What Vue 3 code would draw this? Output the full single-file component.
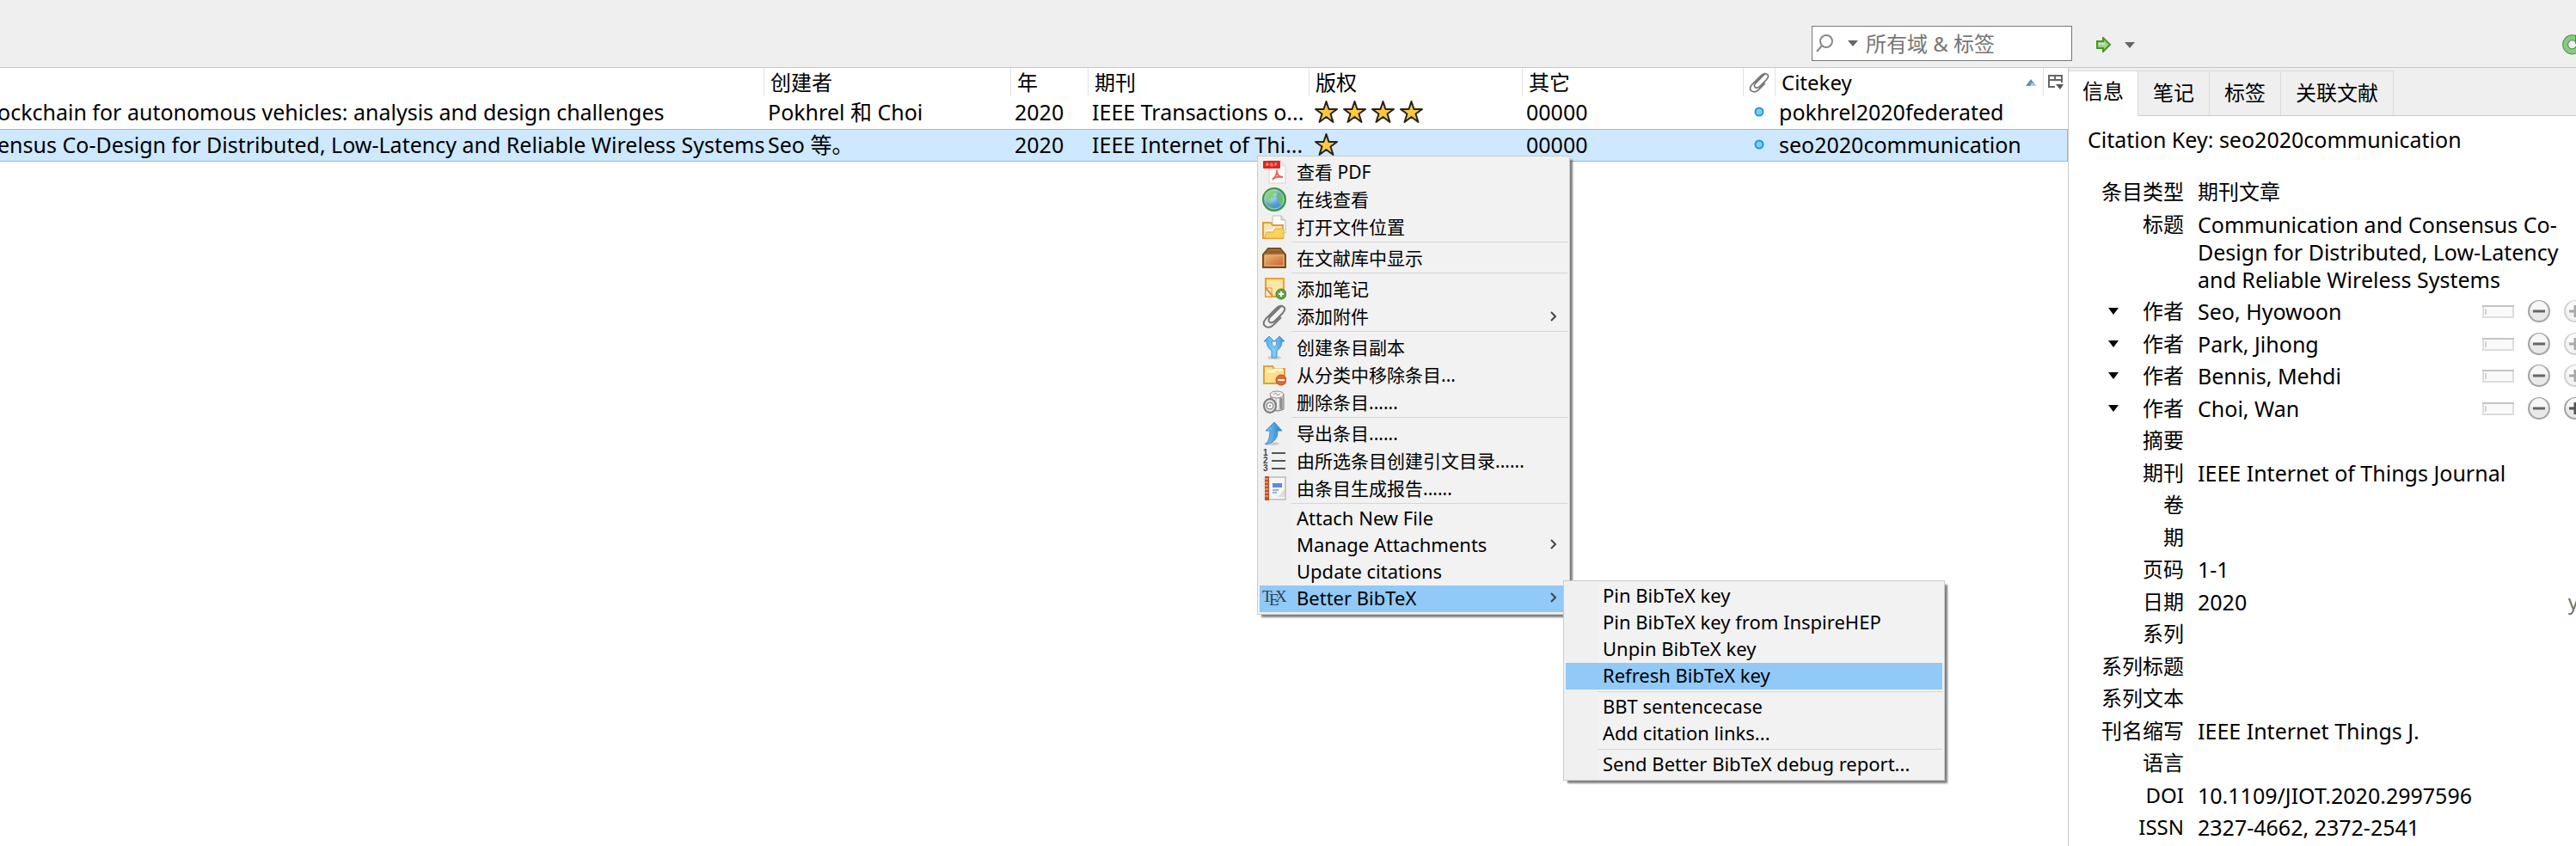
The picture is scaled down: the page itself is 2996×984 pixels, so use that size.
<script setup>
import { ref } from 'vue'

const query = ref('')

const rows = [
  { title: 'ockchain for autonomous vehicles: analysis and design challenges', creator: 'Pokhrel 和 Choi', year: '2020', journal: 'IEEE Transactions o...', stars: 4, extra: '00000', key: 'pokhrel2020federated', selected: false },
  { title: 'ensus Co-Design for Distributed, Low-Latency and Reliable Wireless Systems', creator: 'Seo 等。', year: '2020', journal: 'IEEE Internet of Thi...', stars: 1, extra: '00000', key: 'seo2020communication', selected: true },
]

const tabs = ['信息', '笔记', '标签', '关联文献']

const fields = [
  { label: '条目类型', value: '期刊文章', cjk: true },
  { label: '标题', value: 'Communication and Consensus Co-Design for Distributed, Low-Latency and Reliable Wireless Systems' },
  { label: '作者', value: 'Seo, Hyowoon', author: true, dim: true },
  { label: '作者', value: 'Park, Jihong', author: true, dim: true },
  { label: '作者', value: 'Bennis, Mehdi', author: true, dim: true },
  { label: '作者', value: 'Choi, Wan', author: true },
  { label: '摘要', value: '' },
  { label: '期刊', value: 'IEEE Internet of Things Journal' },
  { label: '卷', value: '' },
  { label: '期', value: '' },
  { label: '页码', value: '1-1' },
  { label: '日期', value: '2020', hint: 'y' },
  { label: '系列', value: '' },
  { label: '系列标题', value: '' },
  { label: '系列文本', value: '' },
  { label: '刊名缩写', value: 'IEEE Internet Things J.' },
  { label: '语言', value: '' },
  { label: 'DOI', value: '10.1109/JIOT.2020.2997596' },
  { label: 'ISSN', value: '2327-4662, 2372-2541' },
]

const clip = '<path d="M22 2 L9 15 Q6 19 9 21 Q12 22 15 19 L24 10 Q28 5 25 3 Q21 0 16 5 L4 17 Q0 22 3 25 Q8 29 13 24 L22 15" fill="none" stroke="#777" stroke-width="2"/>'

const icons = {
  pdf: '<path d="M8 1h14l5 6v20H8z" fill="#fbfbfb" stroke="#d4d4d4"/><path d="M22 1v6h5" fill="#e8e8e8" stroke="#d4d4d4"/><rect x="1" y="1" width="20" height="9" rx="1" fill="#e0281c"/><path d="M5 7V4h2v2H5M10 7V4q3 0 2 3zM15 7V4h2M15 5h2" fill="none" stroke="#f8a49c"/><path d="M17 12q1 5-5 11M17 14q1 6 7 6M12 22q5-3 11-2" fill="none" stroke="#e8645a" stroke-width="2"/>',
  globe: '<defs><radialGradient id="gl" cx=".35" cy=".3"><stop offset="0" stop-color="#d6efff"/><stop offset="1" stop-color="#4b95d6"/></radialGradient></defs><circle cx="14" cy="14" r="13" fill="url(#gl)" stroke="#3d9445" stroke-width="2"/><path d="M3 8Q7 2 15 3l2 3-4 2 1 4-4 1-1 5q-5-1-6-6z" fill="#83cf83"/><path d="M18 6l6 2 2 7-3 6-4-3 1-4-4-3z" fill="#69bd6c"/><path d="M6 20l5 1 3 5-6-2z" fill="#5fb364"/><circle cx="14" cy="14" r="11" fill="none" stroke="#bfe5bf" opacity=".7"/>',
  open: '<path d="M12 1h10l5 5v15H12z" fill="#fafafa" stroke="#bdbdbd"/><path d="M22 1v5h5" fill="#ddd" stroke="#bdbdbd"/><path d="M1 9h9l2 3h12v15H1z" fill="#f9e3ad" stroke="#dca03c" stroke-width="2"/><path d="M3 26l2-6h8l2-4h10v11H3z" fill="#f8d459" stroke="#e3aa45"/><path d="M5 18h7l2-4" fill="none" stroke="#fff" stroke-width="2"/>',
  library: '<defs><linearGradient id="lb" x2="1" y2="1"><stop offset="0" stop-color="#ebb573"/><stop offset="1" stop-color="#cb632f"/></linearGradient></defs><path d="M7 3h14l6 7v15H1V10z" fill="#b77c40" stroke="#784e1d" stroke-width="2"/><path d="M3 9l5-4h12l5 4z" fill="#94602c"/><rect x="3" y="11" width="22" height="12" fill="url(#lb)" stroke="#efbd84"/>',
  note: '<rect x="4" y="2" width="21" height="21" fill="#fae397" stroke="#f09d32" stroke-width="2"/><rect x="7" y="5" width="15" height="15" fill="#fbe8a9"/><path d="M4 13h7v10H4z" fill="#fff3df" stroke="#e28c2c"/><path d="M4 13l8 9" stroke="#e28c2c" stroke-width="2"/><circle cx="22" cy="20" r="6" fill="#62a34b" stroke="#3c7e2d"/><path d="M22 17v6M19 20h6" stroke="#fff" stroke-width="2"/>',
  clip,
  split: '<defs><linearGradient id="sp" x2="1"><stop offset="0" stop-color="#4daae9"/><stop offset=".5" stop-color="#84ccf6"/><stop offset="1" stop-color="#348fd2"/></linearGradient></defs><ellipse cx="14" cy="26" rx="8" ry="2" fill="#ccc"/><path d="M8 1l6 6h-3q0 5 3 7 3-2 3-7h-3l6-6 6 6h-3q0 7-6 11v8h-6v-8Q5 14 5 7H2z" fill="url(#sp)" stroke="#4397d2"/>',
  remove: '<path d="M2 4h10l2 3h12v17H2z" fill="#f9e08b" stroke="#d9a23c" stroke-width="2"/><path d="M5 10h8l2-2h9" fill="none" stroke="#fff8d8" stroke-width="3"/><circle cx="22" cy="20" r="6" fill="#e06a32" stroke="#b7481e"/><path d="M18 20h8" stroke="#fff" stroke-width="2"/>',
  trash: '<path d="M10 5v17q7 4 15 0V5z" fill="#d2d2d2" stroke="#777"/><path d="M22 9v13" stroke="#8c8c8c" stroke-width="3"/><path d="M14 9v12M18 9v13" stroke="#f2f2f2" stroke-width="2"/><ellipse cx="17" cy="5" rx="8" ry="4" fill="#f0f0f0" stroke="#888"/><path d="M13 5l3-2 2 3 3-2" fill="none" stroke="#999"/><ellipse cx="9" cy="18" rx="7" ry="8" fill="#e0e0e0" stroke="#777" stroke-width="2"/><circle cx="9" cy="18" r="4" fill="#f4f4f4" stroke="#777"/><circle cx="9" cy="18" r="1" fill="#888"/>',
  export: '<defs><linearGradient id="ex" x2="1"><stop offset="0" stop-color="#7cc9f5"/><stop offset="1" stop-color="#267fc4"/></linearGradient></defs><ellipse cx="11" cy="26" rx="9" ry="2" fill="#ccc"/><path d="M14 1l9 10h-5q1 13-14 16 5-5 5-16H4z" fill="url(#ex)" stroke="#438fca"/>',
  list: '<g stroke="#555" stroke-width="2"><path d="M11 5h16M11 14h16M11 23h16"/></g><g fill="#444" font-family="Liberation Sans, sans-serif" font-size="10" font-weight="bold"><text x="1" y="8">1</text><text x="1" y="17">2</text><text x="1" y="26">3</text></g>',
  report: '<rect x="6" y="1" width="21" height="26" fill="#f6f6f6" stroke="#c8c8c8" stroke-width="2"/><rect x="3" y="0" width="5" height="28" fill="#c25022"/><path d="M1 3h6M1 7h6M1 11h6M1 15h6M1 19h6M1 23h6" stroke="#f4cab1"/><rect x="12" y="8" width="11" height="5" fill="#5a8bdd"/><path d="M12 16h7M12 19h5" stroke="#93b3e4" stroke-width="2"/><path d="M18 24l8-9v9z" fill="#ddd"/>',
  tex: '<g fill="#30414e" font-family="Liberation Serif, serif" font-size="19"><text x="0" y="19">T</text><text x="8" y="23">E</text><text x="15" y="19">X</text></g>',
}

const menu = [
  { icon: 'pdf', text: '查看 PDF' },
  { icon: 'globe', text: '在线查看' },
  { icon: 'open', text: '打开文件位置' },
  { sep: true },
  { icon: 'library', text: '在文献库中显示' },
  { sep: true },
  { icon: 'note', text: '添加笔记' },
  { icon: 'clip', text: '添加附件', more: true },
  { sep: true },
  { icon: 'split', text: '创建条目副本' },
  { icon: 'remove', text: '从分类中移除条目...' },
  { icon: 'trash', text: '删除条目......' },
  { sep: true },
  { icon: 'export', text: '导出条目......' },
  { icon: 'list', text: '由所选条目创建引文目录......' },
  { icon: 'report', text: '由条目生成报告......' },
  { sep: true },
  { text: 'Attach New File', short: true },
  { text: 'Manage Attachments', short: true, more: true },
  { text: 'Update citations', short: true },
  { icon: 'tex', text: 'Better BibTeX', short: true, more: true, active: true },
]

const submenu = [
  { text: 'Pin BibTeX key' },
  { text: 'Pin BibTeX key from InspireHEP' },
  { text: 'Unpin BibTeX key' },
  { text: 'Refresh BibTeX key', active: true },
  { sep: true },
  { text: 'BBT sentencecase' },
  { text: 'Add citation links...' },
  { sep: true },
  { text: 'Send Better BibTeX debug report...' },
]
</script>

<template>
  <div class="app">
    <header class="toolbar">
      <div class="search">
        <button class="search-mode" aria-label="搜索范围">
          <svg width="20" height="22" viewBox="0 0 20 22"><circle cx="12" cy="8" r="7" fill="none" stroke="#888" stroke-width="2" /><path d="M7 13L1 20" stroke="#888" stroke-width="2" /></svg>
          <svg width="12" height="7" viewBox="0 0 12 7"><path d="M0 0h12L6 7z" fill="#666" /></svg>
        </button>
        <input v-model="query" type="text" aria-label="搜索" placeholder="所有域 &amp; 标签" />
      </div>
      <div class="tools">
        <button class="locate" aria-label="定位">
          <svg width="18" height="18" viewBox="0 0 18 18"><path d="M1 5h7V1l8 8-8 8v-4H1z" fill="#a5d28c" stroke="#489624" stroke-width="2" /><path d="M3 8h7" stroke="#c7e6b4" stroke-width="2" /></svg>
          <svg width="12" height="7" viewBox="0 0 12 7"><path d="M0 0h12L6 7z" fill="#666" /></svg>
        </button>
        <button class="sync" aria-label="同步">
          <svg width="24" height="24" viewBox="0 0 24 24"><path d="M18 7A8 8 0 1 0 19 15" fill="none" stroke="#469341" stroke-width="7" /><path d="M18 7A8 8 0 1 0 19 15" fill="none" stroke="#8ac983" stroke-width="5" /><path d="M15 0v11h8z" fill="#469341" /></svg>
        </button>
      </div>
    </header>

    <main class="body">
      <section class="items">
        <table>
          <colgroup>
            <col /><col class="c-creator" /><col class="c-year" /><col class="c-journal" /><col class="c-rights" /><col class="c-extra" /><col class="c-clip" /><col class="c-key" /><col class="c-pick" />
          </colgroup>
          <thead>
            <tr>
              <th></th>
              <th>创建者</th>
              <th>年</th>
              <th>期刊</th>
              <th>版权</th>
              <th>其它</th>
              <th class="center" aria-label="附件"><svg width="24" height="24" viewBox="0 0 28 28" v-html="clip"></svg></th>
              <th><div class="sorted"><span>Citekey</span><svg width="12" height="8" viewBox="0 0 12 8"><path d="M0 8L6 0l6 8z" fill="#5a93b5" /><path d="M5 8L7 4l5 4z" fill="#a9d3ea" /></svg></div></th>
              <th class="center">
                <button class="picker" aria-label="选择列">
                  <svg width="18" height="17" viewBox="0 0 18 17"><path d="M1 15V1h15v8M1 6h15M8 1v5M1 14h7" fill="none" stroke="#666" stroke-width="2" /><path d="M9 11h9l-4 6z" fill="#555" /></svg>
                </button>
              </th>
            </tr>
          </thead>
          <tbody>
            <tr v-for="r in rows" :key="r.key" :class="{ selected: r.selected }">
              <td class="title">{{ r.title }}</td>
              <td>{{ r.creator }}</td>
              <td>{{ r.year }}</td>
              <td>{{ r.journal }}</td>
              <td>
                <div class="stars">
                  <svg v-for="n in r.stars" :key="n" width="27" height="26" viewBox="0 0 27 26"><path d="M13.500 1L16.500 10H26L18.500 15.500 21.500 25 13.500 19 5.500 25 8.500 15.500 1 10h9.500z" fill="#ffc83d" stroke="#222" stroke-width="2" stroke-linejoin="round" /></svg>
                </div>
              </td>
              <td>{{ r.extra }}</td>
              <td class="center"><svg class="dot" width="12" height="12" viewBox="0 0 12 12"><circle cx="6" cy="6" r="4.500" fill="#7fcdf5" stroke="#2196d8" stroke-width="2" /></svg></td>
              <td>{{ r.key }}</td>
              <td></td>
            </tr>
          </tbody>
        </table>
      </section>

      <aside class="side">
        <nav class="tabs" role="tablist">
          <button v-for="(t, i) in tabs" :key="t" role="tab" :aria-selected="i === 0" :class="{ on: i === 0 }">{{ t }}</button>
        </nav>
        <div class="info">
          <p class="citation">Citation Key: seo2020communication</p>
          <div v-for="(f, i) in fields" :key="i" class="field">
            <div class="label">
              <button v-if="f.author" class="drop" aria-label="作者类型"><svg width="12" height="8" viewBox="0 0 12 8"><path d="M0 0h12L6 8z" fill="#000" /></svg></button>
              <span>{{ f.label }}</span>
            </div>
            <div class="value" :class="{ cjk: f.cjk }">{{ f.value }}</div>
            <div v-if="f.author" class="actions">
              <button aria-label="切换为单字段"><svg width="37" height="15" viewBox="0 0 37 15"><rect x="1" y="1" width="35" height="13" fill="#fafafa" stroke="#ddd" stroke-width="2" /><path d="M0 1h37" stroke="#c4c4c4" stroke-width="2" /><path d="M4 4v7" stroke="#aaa" /></svg></button>
              <button aria-label="移除"><svg width="26" height="26" viewBox="0 0 26 26"><circle cx="13" cy="13" r="12" fill="#e9e9e9" stroke="#a4a4a4" stroke-width="2" /><path d="M3 11a10 10 0 0 1 20 0z" fill="#f7f7f7" /><path d="M6 13h14" stroke="#666" stroke-width="3" /></svg></button>
              <button aria-label="添加" :class="{ dim: f.dim }"><svg width="26" height="26" viewBox="0 0 26 26"><circle cx="13" cy="13" r="12" fill="#e9e9e9" stroke="#a4a4a4" stroke-width="2" /><path d="M3 11a10 10 0 0 1 20 0z" fill="#f7f7f7" /><path d="M6 13h14M13 6v14" stroke="#555" stroke-width="3" /></svg></button>
            </div>
            <span v-if="f.hint" class="hint">{{ f.hint }}</span>
          </div>
        </div>
      </aside>
    </main>

    <div class="menu main-menu" role="menu">
      <template v-for="(m, i) in menu" :key="i">
        <hr v-if="m.sep" />
        <button v-else role="menuitem" :class="{ short: m.short, active: m.active }">
          <span class="ico"><svg v-if="m.icon" width="28" height="28" viewBox="0 0 28 28" v-html="icons[m.icon]"></svg></span>
          <span>{{ m.text }}</span>
          <svg v-if="m.more" class="more" width="8" height="12" viewBox="0 0 8 12"><path d="M1 1l5 5-5 5" fill="none" stroke="#444" stroke-width="2" /></svg>
        </button>
      </template>
    </div>

    <div class="menu sub-menu" role="menu">
      <template v-for="(m, i) in submenu" :key="i">
        <hr v-if="m.sep" />
        <button v-else role="menuitem" class="short" :class="{ active: m.active }">
          <span class="ico"></span>
          <span>{{ m.text }}</span>
        </button>
      </template>
    </div>
  </div>
</template>

<style>
body {
  margin: 0;
  background: #fff;
}
</style>

<style scoped>
.app {
  position: relative;
  display: flex;
  flex-direction: column;
  height: 100vh;
  overflow: hidden;
  background: #fff;
  color: #000;
  font-family: "Noto Sans", "Noto Sans CJK SC", sans-serif;
  font-size: 24px;
  line-height: 32px;
}
svg {
  display: block;
  flex: none;
}
button {
  box-sizing: border-box;
  padding: 0;
  border: 0;
  background: none;
  color: inherit;
  font: inherit;
  flex: none;
}
.toolbar {
  flex: none;
  display: flex;
  justify-content: flex-end;
  height: 78px;
  background: #efefef;
  border-bottom: 1px solid #c8c8c8;
}
.search {
  box-sizing: border-box;
  display: flex;
  align-items: center;
  width: 303px;
  height: 41px;
  margin-top: 30px;
  border: 1px solid #767676;
  background: #fff;
}
.search-mode {
  display: flex;
  align-items: center;
  gap: 17px;
  padding: 0 9px 0 4px;
}
.search input {
  flex: 1;
  min-width: 0;
  padding: 0;
  border: 0;
  outline: 0;
  background: none;
  font: inherit;
}
.search input::placeholder {
  color: #767676;
  opacity: 1;
}
.tools {
  box-sizing: border-box;
  display: flex;
  justify-content: space-between;
  align-items: center;
  width: 586px;
  padding: 26px 0 0 28px;
}
.locate {
  display: flex;
  align-items: center;
  gap: 15px;
}
.sync {
  margin-right: -8px;
}
.body {
  flex: 1;
  display: flex;
  min-height: 0;
}
.items {
  flex: 1;
  min-width: 0;
  overflow: hidden;
}
table {
  width: 100%;
  table-layout: fixed;
  border-collapse: separate;
  border-spacing: 0;
}
.c-creator { width: 287px; }
.c-year { width: 90px; }
.c-journal { width: 257px; }
.c-rights { width: 248px; }
.c-extra { width: 257px; }
.c-clip { width: 37px; }
.c-key { width: 312px; }
.c-pick { width: 29px; }
th,
td {
  box-sizing: border-box;
  padding: 0;
  font-weight: 400;
  text-align: left;
  white-space: nowrap;
}
th {
  height: 33px;
  padding-left: 7px;
  border-left: 1px solid #e2e2e2;
}
th:first-child {
  border-left: 0;
}
td {
  height: 38px;
  padding: 0 0 2px 5px;
  border: solid transparent;
  border-width: 1px 0;
  font-size: 25px;
}
.title {
  padding-left: 0;
  text-indent: -3px;
}
.selected td {
  background: #cde8ff;
  border-color: #7cc2f8;
}
.selected td:last-child {
  border-right-width: 1px;
}
th.center,
td.center {
  padding-left: 0;
}
.center svg {
  margin: 0 auto;
}
.picker {
  display: block;
  margin: 0 auto;
}
.sorted {
  display: flex;
  justify-content: space-between;
  align-items: center;
  padding-right: 8px;
}
.stars {
  display: flex;
  gap: 6px;
  padding-left: 2px;
}
.side {
  box-sizing: border-box;
  flex: none;
  width: 591px;
  border-left: 1px solid #c8c8c8;
  overflow: hidden;
}
.tabs {
  display: flex;
  padding-top: 3px;
  background: #efefef;
  border-bottom: 1px solid #c8c8c8;
}
.tabs button {
  height: 52px;
  padding: 0 17px 2px;
  border: solid #d9d9d9;
  border-width: 1px 1px 0 0;
}
.tabs .on {
  padding: 0 16px 6px;
  margin-bottom: -1px;
  height: 53px;
  background: #fff;
}
.info {
  padding: 11px 0 0;
}
.citation {
  margin: 0 0 29px;
  padding-left: 22px;
  font-size: 25px;
}
.field {
  display: flex;
  align-items: flex-start;
  gap: 16px;
  margin-bottom: 6px;
}
.field:nth-child(odd) {
  margin-bottom: 5px;
}
.label {
  box-sizing: border-box;
  flex: none;
  display: flex;
  justify-content: flex-end;
  align-items: center;
  width: 134px;
}
.drop {
  margin: 0 auto 0 46px;
}
.value {
  flex: 1;
  min-width: 0;
  min-height: 32px;
  font-size: 25px;
}
.value.cjk {
  font-size: 24px;
}
.actions {
  display: flex;
  align-items: center;
  gap: 16px;
  height: 32px;
  margin-right: -12px;
}
.dim {
  opacity: .5;
}
.hint {
  margin-right: -3px;
  color: #707070;
}
.menu {
  position: absolute;
  box-sizing: border-box;
  padding: 2px;
  border: 1px solid #ccc;
  background: linear-gradient(90deg, #f0f0f0 39px, #f2f2f2 39px);
  box-shadow: 4px 4px 2px -1px rgba(0, 0, 0, .5);
  font-size: 21px;
}
.main-menu {
  left: 1462px;
  top: 181px;
  width: 364px;
}
.sub-menu {
  left: 1818px;
  top: 675px;
  width: 444px;
}
.menu button {
  display: flex;
  align-items: center;
  gap: 6px;
  width: 100%;
  height: 32px;
  padding-bottom: 1px;
  text-align: left;
}
.menu .short {
  height: 31px;
  padding-bottom: 3px;
  font-size: 22px;
}
.menu .active {
  background: #91c9f7;
}
.ico {
  box-sizing: border-box;
  width: 37px;
  padding-left: 3px;
}
.more {
  margin: 0 12px 0 auto;
}
.menu hr {
  height: 1px;
  margin: 1px 0 2px 37px;
  border: 0;
  background: #d5d5d5;
}
.sub-menu hr {
  margin: 2px 0 2px 37px;
}
</style>
